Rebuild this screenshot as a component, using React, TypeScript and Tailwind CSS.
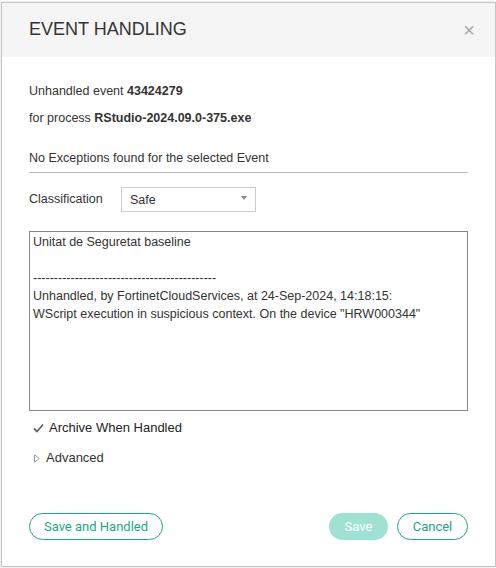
import React, { useState } from 'react'

const font = { fontFamily: '"Liberation Sans", Arial, sans-serif' }

export default function App() {
  const [classification, setClassification] = useState('Safe')
  const [archive] = useState(true)

  return (
    <div className="w-[496px] h-[568px] bg-white overflow-hidden pt-[2px] pl-[1px]" style={font}>
      <div className="w-[495px] h-[565px] border border-[#c4c4c4] bg-white flex flex-col shadow-[0_0_3px_rgba(0,0,0,0.15)]">
        <div className="h-[54px] bg-[#f5f5f5] flex items-center justify-between pl-[27px] pr-[20px]">
          <h1 className="text-[18px] text-[#333] -mt-[2px]">EVENT HANDLING</h1>
          <button className="text-[#aaa] text-[20px] leading-none">×</button>
        </div>

        <div className="flex-1 flex flex-col px-[27px] pt-[23px] text-[12.5px] text-[#333]">
          <div className="h-[22px] flex items-center">
            Unhandled event&nbsp;<span className="font-bold">43424279</span>
          </div>
          <div className="h-[22px] mt-[5px] flex items-center">
            for process&nbsp;<span className="font-bold">RStudio-2024.09.0-375.exe</span>
          </div>
          <div className="h-[22px] mt-[18px] flex items-center text-[12.5px]">No Exceptions found for the selected Event</div>
          <div className="mt-[3px] border-b border-[#bbb]" />

          <div className="mt-[14px] flex items-start">
            <span className="w-[92px] pt-[3px]">Classification</span>
            <div className="relative w-[135px] h-[25px] border border-[#ccc] flex items-center pl-[8px] text-[12.5px]">
              <span className="pt-[2px]">{classification}</span>
              <span className="absolute right-[8px] top-[8px] w-0 h-0 border-l-[3px] border-r-[3px] border-t-[4px] border-l-transparent border-r-transparent border-t-[#888]" />
              <select
                className="absolute inset-0 opacity-0"
                value={classification}
                onChange={(e) => setClassification(e.target.value)}
              >
                <option>Safe</option>
                <option>Malicious</option>
                <option>Suspicious</option>
              </select>
            </div>
          </div>

          <div className="mt-[19px] h-[180px] border border-[#888] px-[3px] pt-[1px] text-[12.5px] leading-[18px] text-[#333]">
            <div>Unitat de Seguretat baseline</div>
            <div>&nbsp;</div>
            <div>--------------------------------------------</div>
            <div>Unhandled, by FortinetCloudServices, at 24-Sep-2024, 14:18:15:</div>
            <div>WScript execution in suspicious context. On the device "HRW000344"</div>
          </div>

          <div className="mt-[7px] h-[20px] flex items-center gap-[5px] pl-[4px]">
            {archive && (
              <svg width="11" height="10" viewBox="0 0 11 10">
                <path d="M1 5.5 L4 8.5 L10 1.5" fill="none" stroke="#666" strokeWidth="1.8" />
              </svg>
            )}
            <span className="text-[13px] text-[#222]">Archive When Handled</span>
          </div>

          <div className="mt-[10px] h-[20px] flex items-center gap-[6px] pl-[5px]">
            <svg width="6" height="9" viewBox="0 0 6 9">
              <path d="M0.5 0.8 L5.2 4.5 L0.5 8.2 Z" fill="none" stroke="#999" strokeWidth="1" />
            </svg>
            <span className="text-[13px] text-[#333]">Advanced</span>
          </div>

          <div className="mt-[45px] flex items-center" style={{ fontFamily: 'Roboto, "Liberation Sans", sans-serif' }}>
            <button className="h-[27px] w-[134px] rounded-full border border-[#19a98a] text-[#19a98a] text-[13px]">
              Save and Handled
            </button>
            <div className="flex-1" />
            <button className="h-[27px] w-[59px] rounded-full bg-[#9fe2d4] text-white text-[13px]">Save</button>
            <button className="ml-[9px] h-[27px] w-[71px] rounded-full border border-[#19a98a] text-[#19a98a] text-[13px]">
              Cancel
            </button>
          </div>
        </div>
      </div>
    </div>
  )
}
